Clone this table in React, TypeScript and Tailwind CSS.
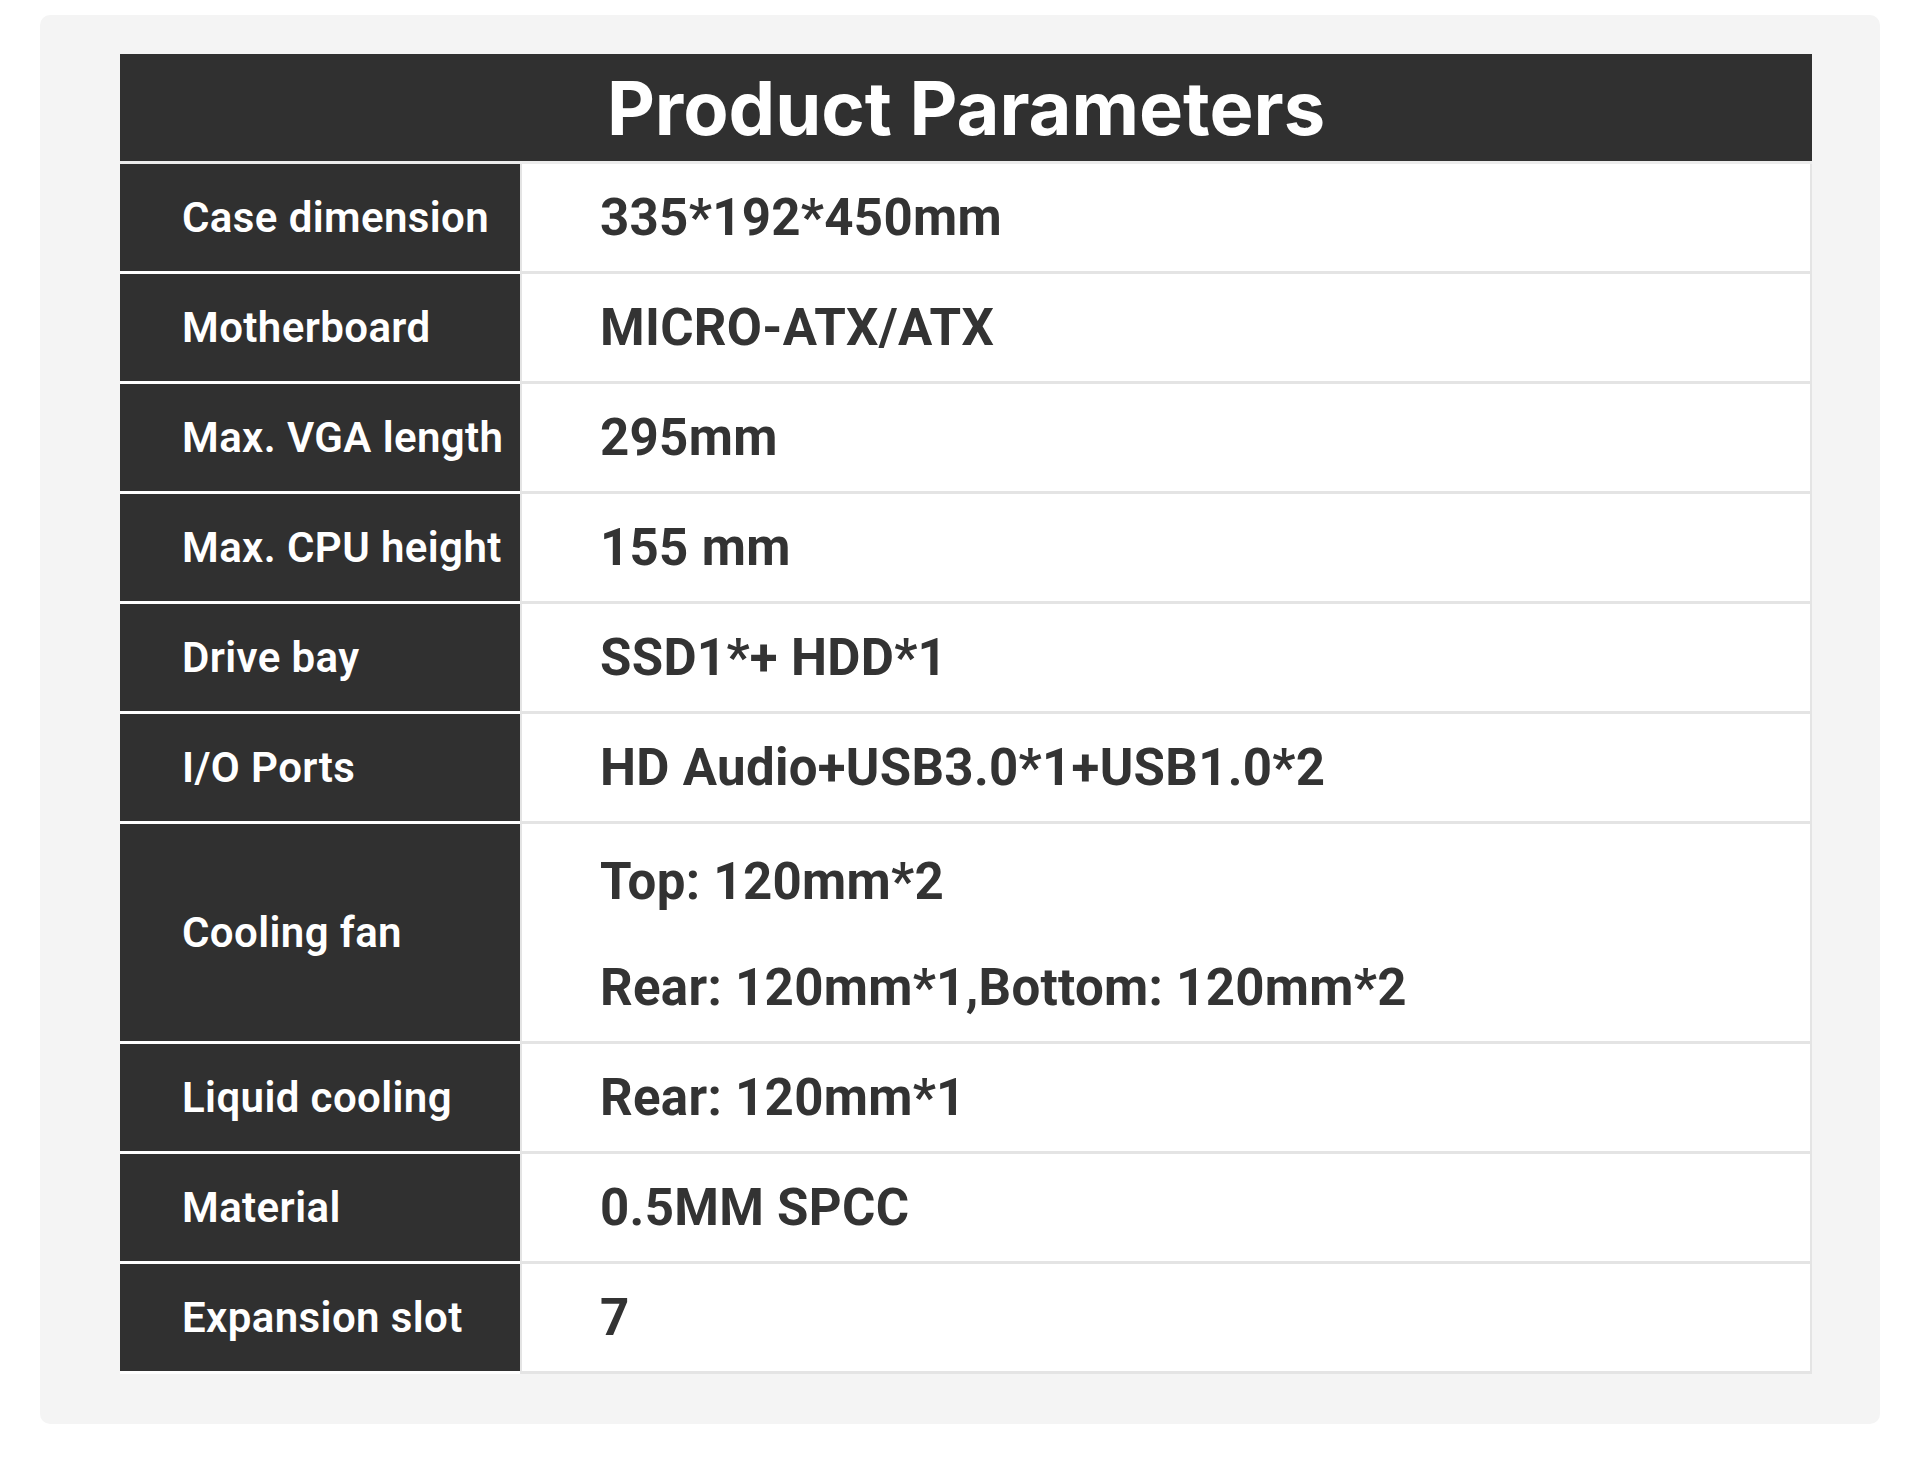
import React from 'react';

interface Spec {
  label: string;
  values: string[];
}

const specs: Spec[] = [
  { label: 'Case dimension', values: ['335*192*450mm'] },
  { label: 'Motherboard', values: ['MICRO-ATX/ATX'] },
  { label: 'Max. VGA length', values: ['295mm'] },
  { label: 'Max. CPU height', values: ['155 mm'] },
  { label: 'Drive bay', values: ['SSD1*+ HDD*1'] },
  { label: 'I/O Ports', values: ['HD Audio+USB3.0*1+USB1.0*2'] },
  { label: 'Cooling fan', values: ['Top: 120mm*2', 'Rear: 120mm*1,Bottom: 120mm*2'] },
  { label: 'Liquid cooling', values: ['Rear: 120mm*1'] },
  { label: 'Material', values: ['0.5MM SPCC'] },
  { label: 'Expansion slot', values: ['7'] },
];

const SpecRow: React.FC<{ spec: Spec }> = ({ spec }) => {
  const tall = spec.values.length > 1;
  return (
    <div className="flex bg-white">
      <div
        className={`w-[400px] shrink-0 bg-[#303030] mb-[3px] flex items-center pl-[62px] ${
          tall ? 'h-[217px]' : 'h-[107px]'
        }`}
      >
        <span className="text-white text-[42px] font-semibold leading-none tracking-[0.4px]">
          {spec.label}
        </span>
      </div>
      <div
        className={`flex-1 flex flex-col border-l-[2px] border-r-[2px] border-b-[3px] border-[#e4e4e4] ${
          tall ? 'pt-[4px]' : ''
        }`}
      >
        {spec.values.map((v) => (
          <div key={v} className="flex-1 flex items-center pl-[78px]">
            <span className="text-[#333333] text-[51px] font-bold leading-none tracking-[0.3px]">{v}</span>
          </div>
        ))}
      </div>
    </div>
  );
};

export default function App() {
  return (
    <div
      className="min-h-screen bg-white pt-[15px] pl-[40px]"
      style={{ fontFamily: 'Roboto, "Noto Sans", Arial, sans-serif' }}
    >
      <div className="w-[1840px] bg-[#f4f4f4] rounded-[10px] pl-[80px] pr-[68px] pt-[39px] pb-[50px]">
        <div className="flex flex-col">
          {/* header */}
          <div className="h-[107px] bg-[#303030] flex items-center justify-center border-b-[3px] border-[#ececec] box-content">
            <h1
              className="text-white text-[74px] font-bold leading-none"
              style={{ fontFamily: 'Inter, "Noto Sans", sans-serif' }}
            >
              Product Parameters
            </h1>
          </div>
          {specs.map((s) => (
            <SpecRow key={s.label} spec={s} />
          ))}
        </div>
      </div>
    </div>
  );
}
